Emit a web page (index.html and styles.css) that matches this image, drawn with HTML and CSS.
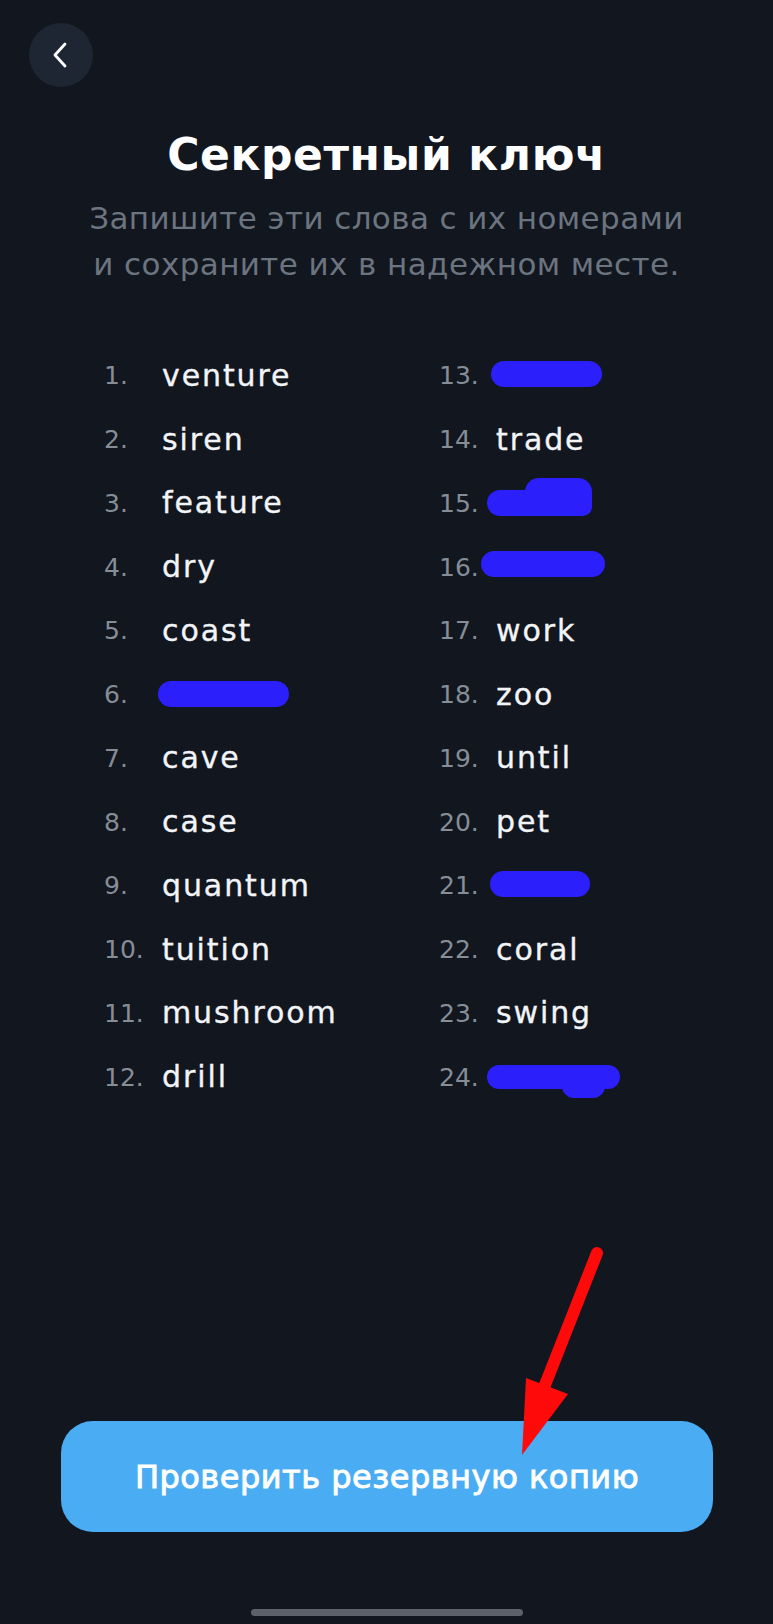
FILE: index.html
```html
<!DOCTYPE html>
<html lang="ru">
<head>
<meta charset="utf-8">
<title>Секретный ключ</title>
<link rel="stylesheet" href="styles.css">
</head>
<body>
<div class="screen">
  <header class="topbar">
    <button class="back" aria-label="Назад">
      <svg width="24" height="26" viewBox="0 0 24 26"><path d="M17 2 L7 13 L17 24" fill="none" stroke="#ffffff" stroke-width="2.8" stroke-linecap="round" stroke-linejoin="round"/></svg>
    </button>
  </header>

  <section class="intro">
    <h1 class="title">Секретный ключ</h1>
    <p class="subtitle">Запишите эти слова с их номерами<br>и сохраните их в надежном месте.</p>
  </section>

  <ol class="words">
    <li class="item"><span class="num">1.</span><span class="word">venture</span></li>
    <li class="item"><span class="num">13.</span><span class="word"><span class="blob b13"></span></span></li>
    <li class="item"><span class="num">2.</span><span class="word">siren</span></li>
    <li class="item"><span class="num">14.</span><span class="word">trade</span></li>
    <li class="item"><span class="num">3.</span><span class="word">feature</span></li>
    <li class="item"><span class="num">15.</span><span class="word"><span class="blob b15"></span><span class="blob b15b"></span></span></li>
    <li class="item"><span class="num">4.</span><span class="word">dry</span></li>
    <li class="item"><span class="num">16.</span><span class="word"><span class="blob b16"></span></span></li>
    <li class="item"><span class="num">5.</span><span class="word">coast</span></li>
    <li class="item"><span class="num">17.</span><span class="word">work</span></li>
    <li class="item"><span class="num">6.</span><span class="word"><span class="blob b6"></span></span></li>
    <li class="item"><span class="num">18.</span><span class="word">zoo</span></li>
    <li class="item"><span class="num">7.</span><span class="word">cave</span></li>
    <li class="item"><span class="num">19.</span><span class="word">until</span></li>
    <li class="item"><span class="num">8.</span><span class="word">case</span></li>
    <li class="item"><span class="num">20.</span><span class="word">pet</span></li>
    <li class="item"><span class="num">9.</span><span class="word">quantum</span></li>
    <li class="item"><span class="num">21.</span><span class="word"><span class="blob b21"></span></span></li>
    <li class="item"><span class="num">10.</span><span class="word">tuition</span></li>
    <li class="item"><span class="num">22.</span><span class="word">coral</span></li>
    <li class="item"><span class="num">11.</span><span class="word">mushroom</span></li>
    <li class="item"><span class="num">23.</span><span class="word">swing</span></li>
    <li class="item"><span class="num">12.</span><span class="word">drill</span></li>
    <li class="item"><span class="num">24.</span><span class="word"><span class="blob b24"></span><span class="blob b24b"></span></span></li>
  </ol>

  <div class="spacer"></div>

  <div class="actions">
    <button class="primary">Проверить резервную копию</button>
  </div>

  <div class="home-bar"></div>

  <svg class="annotation" width="773" height="1624" viewBox="0 0 773 1624" aria-hidden="true">
    <line x1="597" y1="1253" x2="545" y2="1385" stroke="#ff0a0a" stroke-width="12" stroke-linecap="round"/>
    <polygon points="526,1378 568,1394 522,1455" fill="#ff0a0a"/>
  </svg>
</div>
</body>
</html>
```

FILE: styles.css
```css
* { box-sizing: border-box; }

html, body {
  margin: 0;
  padding: 0;
  background: #11161f;
}

body {
  font-family: "DejaVu Sans", "Noto Sans", "Liberation Sans", sans-serif;
  color: #ffffff;
}

.screen {
  position: relative;
  width: 773px;
  height: 1624px;
  display: flex;
  flex-direction: column;
  background: #11161f;
  overflow: hidden;
}

.topbar {
  padding: 23px 0 0 29px;
  height: 87px;
}

.back {
  width: 64px;
  height: 64px;
  border-radius: 50%;
  border: none;
  background: #1e2633;
  display: flex;
  align-items: center;
  justify-content: center;
  padding: 0 2px 0 0;
}

.intro {
  margin-top: 43px;
  text-align: center;
}

.title {
  margin: 0;
  font-size: 44px;
  line-height: 50px;
  font-weight: 700;
  letter-spacing: 0.6px;
  color: #ffffff;
}

.subtitle {
  margin: 15px 0 0;
  font-size: 31px;
  line-height: 46px;
  font-weight: 400;
  letter-spacing: 0.4px;
  color: #6c7480;
}

.words {
  list-style: none;
  margin: 57px 0 0;
  padding: 0 0 0 104px;
  display: grid;
  grid-template-columns: 335px 1fr;
  grid-auto-rows: 63.75px;
}

.item {
  display: flex;
  align-items: center;
}

.num {
  width: 58px;
  flex: none;
  font-size: 25px;
  color: #868d97;
  letter-spacing: 0;
}

.item:nth-child(even) .num {
  width: 57px;
}

.word {
  position: relative;
  font-size: 30px;
  font-weight: 400;
  letter-spacing: 1.9px;
  color: #f2f4f7;
  height: 34px;
  line-height: 34px;
  flex: 1;
  -webkit-text-stroke: 0.35px #f2f4f7;
}

.blob {
  position: absolute;
  background: #2b1ffb;
  border-radius: 14px;
}

.b13 { left: -5px; top: 2px; width: 111px; height: 26px; }
.b15 { left: -9px; top: 4px; width: 105px; height: 26px; border-radius: 14px 8px 10px 14px; }
.b15b { left: 29px; top: -8px; width: 67px; height: 30px; border-radius: 14px 14px 6px 6px; }
.b16 { left: -15px; top: 1px; width: 124px; height: 26px; }
.b6 { left: -4px; top: 3px; width: 131px; height: 26px; }
.b21 { left: -6px; top: 2px; width: 100px; height: 26px; }
.b24 { left: -9px; top: 5px; width: 133px; height: 24px; }
.b24b { left: 66px; top: 14px; width: 43px; height: 24px; border-radius: 8px 8px 12px 12px; }

.spacer {
  flex: 1;
}

.actions {
  padding: 0 60px 0 61px;
}

.primary {
  width: 100%;
  height: 111px;
  border: none;
  border-radius: 32px;
  background: #4aadf4;
  color: #ffffff;
  font-family: "DejaVu Sans", "Noto Sans", "Liberation Sans", sans-serif;
  font-size: 32px;
  font-weight: 400;
  letter-spacing: 0.5px;
  -webkit-text-stroke: 0.9px #ffffff;
}

.home-bar {
  margin: 77px auto 8px;
  width: 272px;
  height: 7px;
  border-radius: 4px;
  background: #5d6169;
}

.annotation {
  position: absolute;
  left: 0;
  top: 0;
  pointer-events: none;
}
```
